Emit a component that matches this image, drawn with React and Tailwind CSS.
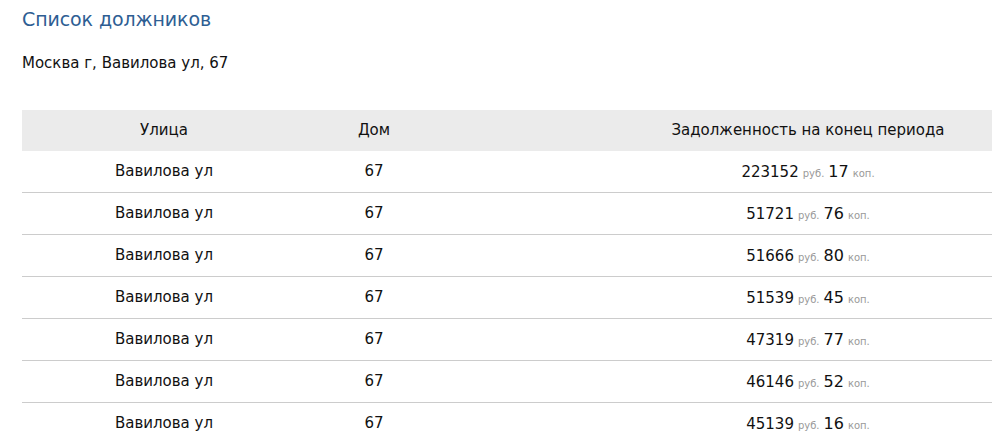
import React from 'react';

const rows = [
  { street: 'Вавилова ул', house: '67', rub: '223152', kop: '17' },
  { street: 'Вавилова ул', house: '67', rub: '51721', kop: '76' },
  { street: 'Вавилова ул', house: '67', rub: '51666', kop: '80' },
  { street: 'Вавилова ул', house: '67', rub: '51539', kop: '45' },
  { street: 'Вавилова ул', house: '67', rub: '47319', kop: '77' },
  { street: 'Вавилова ул', house: '67', rub: '46146', kop: '52' },
  { street: 'Вавилова ул', house: '67', rub: '45139', kop: '16' },
];

const cols = 'grid grid-cols-[284px_136px_732px]';

const App = () => {
  return (
    <div className="w-full h-[443px] overflow-hidden bg-white text-[#111111] font-['DejaVu_Sans',sans-serif]">
      <div className="pl-[22px] pt-[7px]">
        <h1 className="text-[19px] leading-[24px] text-[#2e5e93] tracking-[-0.1px]">Список должников</h1>
        <p className="mt-[23px] text-[15px] leading-[18px]">Москва г, Вавилова ул, 67</p>

        <div className="mt-[38px] w-[1152px]">
          <div className={`${cols} h-[41px] items-center bg-[#ebebeb] text-[15px]`}>
            <div className="text-center">Улица</div>
            <div className="text-center">Дом</div>
            <div className="text-center">Задолженность на конец периода</div>
          </div>
          {rows.map((row, index) => (
            <div
              key={index}
              className={`${cols} h-[42px] items-center border-b border-[#cccccc] text-[15px]`}
            >
              <div className="text-center">{row.street}</div>
              <div className="text-center">{row.house}</div>
              <div className="text-center">
                <span className="text-[15px]">{row.rub}</span>
                <span className="text-[10px] text-[#999999] ml-1">руб.</span>
                <span className="text-[16px] ml-1">{row.kop}</span>
                <span className="text-[10px] text-[#999999] ml-1">коп.</span>
              </div>
            </div>
          ))}
        </div>
      </div>
    </div>
  );
};

export default App;
